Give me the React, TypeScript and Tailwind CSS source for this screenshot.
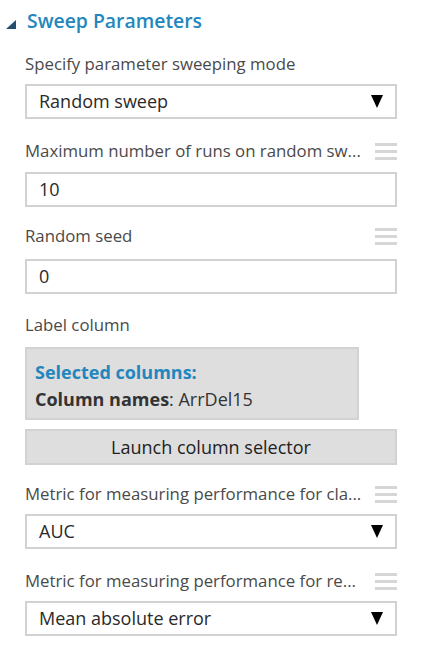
import React from 'react';

const FONT = { fontFamily: '"Open Sans", "Noto Sans", sans-serif' };

// Three grey bars shown next to parameters that can be swept
const Handle = () => (
	<div className="flex flex-col gap-[4px] w-[22px] pt-[1px]">
		<div className="h-[3px] bg-[#d6d6d6]" />
		<div className="h-[3px] bg-[#d6d6d6]" />
		<div className="h-[3px] bg-[#d6d6d6]" />
	</div>
);

const FieldLabel = ({ text, handle }: { text: string; handle?: boolean }) => (
	<div className="flex items-center justify-between h-[24px]">
		<span className="text-[16.8px] text-[#4a4a4a] whitespace-nowrap leading-[24px]">{text}</span>
		{handle && <Handle />}
	</div>
);

const Select = ({ value }: { value: string }) => (
	<div className="flex items-center justify-between h-[35px] border-2 border-[#d2d2d2] bg-white pl-[12px] pr-[12px]">
		<span className="text-[18px] text-[#2a2a2a]">{value}</span>
		<svg width="12" height="13" viewBox="0 0 12 13">
			<polygon points="0,0 12,0 6,13" fill="#000" />
		</svg>
	</div>
);

const TextInput = ({ value }: { value: string }) => (
	<div className="flex items-center h-[35px] border-2 border-[#d2d2d2] bg-white pl-[12px]">
		<span className="text-[18px] text-[#2a2a2a]">{value}</span>
	</div>
);

export default function App() {
	return (
		<div className="w-[423px] h-[655px] bg-white overflow-hidden" style={FONT}>
			{/* Section header */}
			<div className="flex items-center h-[34px] mt-[4px]">
				<svg className="ml-[6px] mt-[6px]" width="10" height="9" viewBox="0 0 10 9">
					<polygon points="10,0 10,9 0,9" fill="#234e6e" />
				</svg>
				<span className="ml-[11px] text-[19.4px] font-semibold text-[#2386bd]">Sweep Parameters</span>
			</div>

			<div className="pl-[25px] pr-[26px]">
				<div className="mt-[14px]">
					<FieldLabel text="Specify parameter sweeping mode" />
					<div className="mt-[8px]">
						<Select value="Random sweep" />
					</div>
				</div>

				<div className="mt-[20px]">
					<FieldLabel text="Maximum number of runs on random sw..." handle />
					<div className="mt-[9px]">
						<TextInput value="10" />
					</div>
				</div>

				<div className="mt-[17px]">
					<FieldLabel text="Random seed" handle />
					<div className="mt-[11px]">
						<TextInput value="0" />
					</div>
				</div>

				<div className="mt-[19px]">
					<FieldLabel text="Label column" />
					<div className="mt-[10px] w-[334px] h-[73px] bg-[#dedede] border-2 border-[#d2d2d2] px-[8px] pt-[12px]">
						<div className="text-[18px] font-bold text-[#2386bd] leading-[22px]">Selected columns:</div>
						<div className="text-[18px] text-[#333] leading-[24px] mt-[4px]">
							<span className="font-bold">Column names</span>: ArrDel15
						</div>
					</div>
					<button className="mt-[9px] w-full h-[36px] bg-[#dedede] border-2 border-[#d2d2d2] text-[18px] text-[#222]">
						Launch column selector
					</button>
				</div>

				<div className="mt-[17px]">
					<FieldLabel text="Metric for measuring performance for cla..." handle />
					<div className="mt-[8px]">
						<Select value="AUC" />
					</div>
				</div>

				<div className="mt-[20px]">
					<FieldLabel text="Metric for measuring performance for re..." handle />
					<div className="mt-[8px]">
						<Select value="Mean absolute error" />
					</div>
				</div>
			</div>
		</div>
	);
}
